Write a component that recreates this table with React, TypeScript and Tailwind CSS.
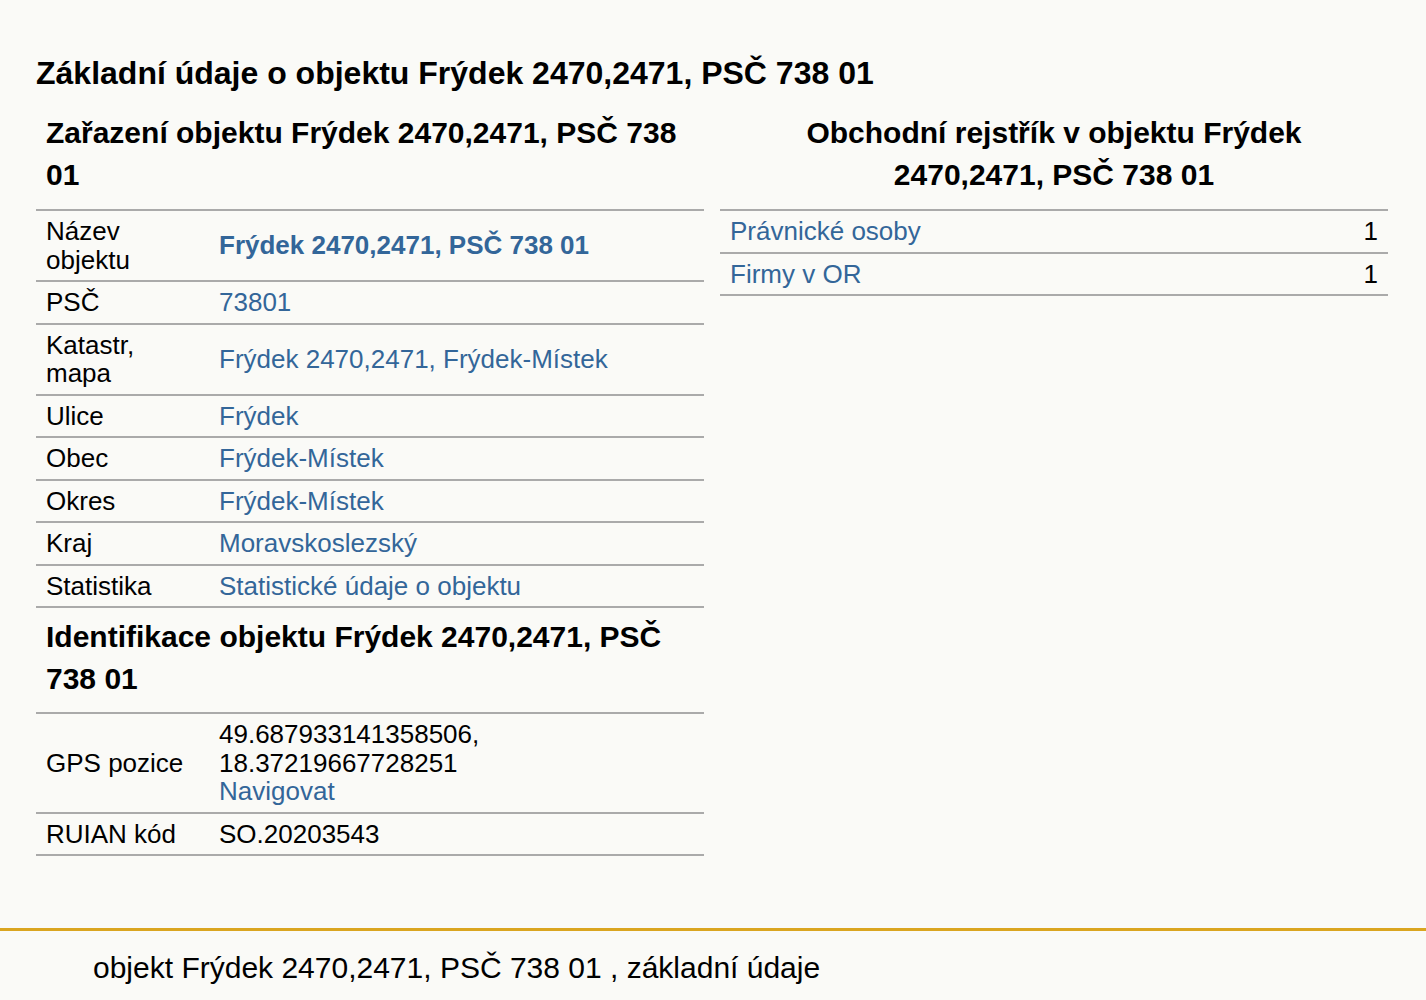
import React from 'react';

interface Row {
  label: string;
  value: React.ReactNode;
}

const link = 'text-[#336699]';

const zarazeni: Row[] = [
  { label: 'Název objektu', value: <a className={`${link} font-bold`}>Frýdek 2470,2471, PSČ 738 01</a> },
  { label: 'PSČ', value: <a className={link}>73801</a> },
  { label: 'Katastr, mapa', value: <a className={link}>Frýdek 2470,2471, Frýdek-Místek</a> },
  { label: 'Ulice', value: <a className={link}>Frýdek</a> },
  { label: 'Obec', value: <a className={link}>Frýdek-Místek</a> },
  { label: 'Okres', value: <a className={link}>Frýdek-Místek</a> },
  { label: 'Kraj', value: <a className={link}>Moravskoslezský</a> },
  { label: 'Statistika', value: <a className={link}>Statistické údaje o objektu</a> },
];

const identifikace: Row[] = [
  {
    label: 'GPS pozice',
    value: (
      <>
        49.687933141358506,
        <br />
        18.37219667728251
        <br />
        <a className={link}>Navigovat</a>
      </>
    ),
  },
  { label: 'RUIAN kód', value: 'SO.20203543' },
];

const rejstrik = [
  { label: 'Právnické osoby', count: 1 },
  { label: 'Firmy v OR', count: 1 },
];

function InfoRows({ rows }: { rows: Row[] }) {
  return (
    <div>
      {rows.map((r) => (
        <div key={r.label} className="flex items-center border-b-2 border-[#aaaaaa] py-[6px]">
          <div className="w-[183px] shrink-0 pl-[10px] pr-[24px]">{r.label}</div>
          <div className="flex-1 pr-[10px]">{r.value}</div>
        </div>
      ))}
    </div>
  );
}

export default function App() {
  return (
    <div className="min-h-[1000px] bg-[#fafaf7] text-black [font-family:'Liberation_Sans',Arial,sans-serif] text-[26px] leading-[28.5px]">
      <div className="pl-[36px] pr-[38px] pt-[52px] pb-[72px]">
        <h1 className="text-[32px] font-bold leading-[42px]">
          Základní údaje o objektu Frýdek 2470,2471, PSČ 738 01
        </h1>
        <div className="mt-[18px] grid grid-cols-2 gap-[16px]">
          <div>
            <h2 className="px-[10px] pb-[13px] text-[30px] font-bold leading-[42px]">
              Zařazení objektu Frýdek 2470,2471, PSČ 738 01
            </h2>
            <div className="border-t-2 border-[#aaaaaa]">
              <InfoRows rows={zarazeni} />
            </div>
            <h2 className="px-[10px] pt-[8px] pb-[12px] text-[30px] font-bold leading-[42px]">
              Identifikace objektu Frýdek 2470,2471, PSČ 738 01
            </h2>
            <div className="border-t-2 border-[#aaaaaa]">
              <InfoRows rows={identifikace} />
            </div>
          </div>
          <div>
            <h2 className="px-[10px] pb-[13px] text-center text-[30px] font-bold leading-[42px]">
              Obchodní rejstřík v objektu Frýdek 2470,2471, PSČ 738 01
            </h2>
            <div className="border-t-2 border-[#aaaaaa]">
              {rejstrik.map((r) => (
                <div key={r.label} className="flex justify-between border-b-2 border-[#aaaaaa] px-[10px] py-[6px]">
                  <a className={link}>{r.label}</a>
                  <span>{r.count}</span>
                </div>
              ))}
            </div>
          </div>
        </div>
      </div>
      <footer className="border-t-[3px] border-[#daa520] px-[93px] pt-[20px] pb-[20px] text-[30px] leading-[34px]">
        objekt Frýdek 2470,2471, PSČ 738 01 , základní údaje
      </footer>
    </div>
  );
}
